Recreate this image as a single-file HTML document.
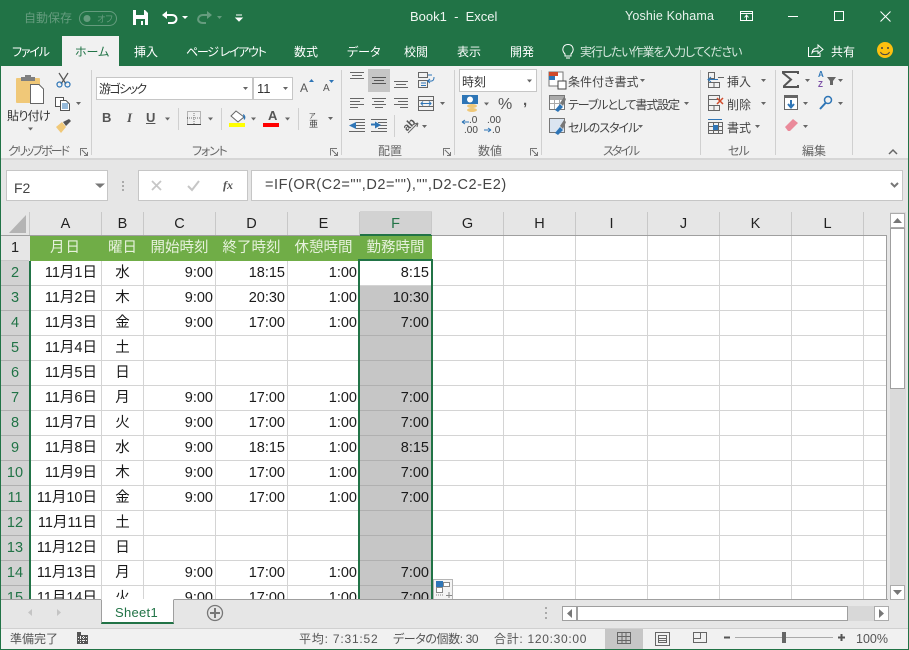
<!DOCTYPE html>
<html lang="ja"><head><meta charset="utf-8"><title>Book1 - Excel</title>
<style>
html,body{margin:0;padding:0}
body{width:909px;height:650px;overflow:hidden;position:relative;background:#e6e6e6;font-family:"Liberation Sans","Noto Sans CJK JP",sans-serif;font-feature-settings:"palt";color:#444}
div,span.t{position:absolute}
.t{position:absolute;white-space:nowrap;line-height:16px;font-size:12px}
.w{color:#fff}
.bx{background:#fff;border:1px solid #c6c6c6;box-sizing:border-box}
svg{position:absolute;left:0;top:0}
.c{position:absolute;line-height:24px;height:24px;font-size:14.5px;color:#1a1a1a;white-space:nowrap;font-feature-settings:normal}
.a{left:30px;width:67px;text-align:right}
.b{left:102px;width:41px;text-align:center}
.cc{left:144px;width:69px;text-align:right}
.d{left:216px;width:69px;text-align:right}
.e{left:288px;width:69px;text-align:right}
.f{left:360px;width:69px;text-align:right}
.ch{position:absolute;top:212px;height:23px;line-height:24px;text-align:center;font-size:14.5px;color:#222}
.rh{position:absolute;left:1px;width:28px;height:24px;line-height:24px;text-align:center;font-size:14.5px;color:#217346;background:#d2d2d2;border-bottom:1px solid #b0b0b0}
.h{position:absolute;top:236px;height:24px;line-height:24px;text-align:center;font-size:14.5px;color:#e6f1dc;font-feature-settings:normal}
</style></head><body>

<div style="left:0;top:0;width:909px;height:66px;background:#217346"></div>
<div style="left:62px;top:36px;width:57px;height:30px;background:#f1f1f1"></div>
<div style="left:1px;top:66px;width:907px;height:92px;background:#f1f1f1"></div>
<div style="left:1px;top:158px;width:907px;height:2px;background:#d6d6d6"></div>

<span class="t" style="left:24px;top:10px;color:#659c7e">自動保存</span>
<span class="t" style="left:97px;top:11px;color:#659c7e;font-size:9px">オフ</span>
<span class="t w" style="left:410px;top:9px;font-size:13px;white-space:pre;color:#f0f6f2">Book1  -  Excel</span>
<span class="t w" style="left:625px;top:8px;font-size:12.5px;color:#e8f2ec;letter-spacing:.15px">Yoshie Kohama</span>
<span class="t w" style="left:12px;top:44px;letter-spacing:-1.2px">ファイル</span>
<span class="t" style="left:75px;top:44px;color:#217346">ホーム</span>
<span class="t w" style="left:134px;top:44px">挿入</span>
<span class="t w" style="left:186px;top:44px;letter-spacing:-1.3px">ページ レイアウト</span>
<span class="t w" style="left:294px;top:44px">数式</span>
<span class="t w" style="left:347px;top:44px">データ</span>
<span class="t w" style="left:404px;top:44px">校閲</span>
<span class="t w" style="left:457px;top:44px">表示</span>
<span class="t w" style="left:510px;top:44px">開発</span>
<span class="t" style="left:580px;top:44px;color:#d8e8df;letter-spacing:-1.1px">実行したい作業を入力してください</span>
<span class="t w" style="left:831px;top:44px">共有</span>

<div class="bx" style="left:96px;top:77px;width:157px;height:23px"></div>
<div class="bx" style="left:253px;top:77px;width:40px;height:23px"></div>
<span class="t" style="left:99px;top:81px;color:#333;letter-spacing:-1.6px">游ゴシック</span>
<span class="t" style="left:257px;top:81px;color:#333;font-size:13px">11</span>
<span class="t" style="left:7px;top:108px;color:#333;letter-spacing:-.7px">貼り付け</span>
<span class="t" style="left:8px;top:143px;color:#666;letter-spacing:-2px">クリップボード</span>
<span class="t" style="left:192px;top:143px;color:#666;letter-spacing:-1.2px">フォント</span>
<span class="t" style="left:378px;top:143px;color:#666">配置</span>
<span class="t" style="left:478px;top:143px;color:#666">数値</span>
<span class="t" style="left:603px;top:143px;color:#666;letter-spacing:-2px">スタイル</span>
<span class="t" style="left:728px;top:143px;color:#666;letter-spacing:-1px">セル</span>
<span class="t" style="left:802px;top:143px;color:#666">編集</span>
<div style="left:368px;top:69px;width:22px;height:23px;background:#c6c6c6"></div>
<div class="bx" style="left:459px;top:69px;width:78px;height:23px"></div>
<span class="t" style="left:462px;top:74px;color:#333">時刻</span>
<span class="t" style="left:498px;top:96px;font-size:16px;line-height:18px;color:#555">%</span>
<span class="t" style="left:523px;top:93px;font-size:15px;font-weight:bold;color:#555">,</span>
<span class="t" style="left:568px;top:74px">条件付き書式</span>
<span class="t" style="left:568px;top:97px;letter-spacing:-1.1px">テーブルとして書式設定</span>
<span class="t" style="left:568px;top:120px;letter-spacing:-1px">セルのスタイル</span>
<span class="t" style="left:727px;top:74px">挿入</span>
<span class="t" style="left:727px;top:97px">削除</span>
<span class="t" style="left:727px;top:120px">書式</span>
<span class="t" style="left:102px;top:110px;font-weight:bold;color:#555;font-size:13px;width:9px">B</span>
<span class="t" style="left:127px;top:110px;font-weight:bold;font-style:italic;font-family:'Liberation Serif',serif;color:#555;font-size:13px">I</span>
<span class="t" style="left:146px;top:110px;font-weight:bold;color:#555;text-decoration:underline;font-size:13px">U</span>
<span class="t" style="left:268px;top:108px;font-weight:bold;color:#555;font-size:13px">A</span>
<span class="t" style="left:300px;top:80px;font-size:12px;color:#555">A</span>
<span class="t" style="left:323px;top:81px;font-size:10px;color:#555">A</span>
<span class="t" style="left:309px;top:109px;font-size:7px;color:#444">ア</span>
<span class="t" style="left:309px;top:116px;font-size:9px;color:#444">亜</span>
<span class="t" style="left:403px;top:117px;font-size:11px;font-weight:bold;color:#555;transform:rotate(-45deg)">ab</span>
<span class="t" style="left:469px;top:116px;font-size:10px;line-height:9px;color:#444">.0</span>
<span class="t" style="left:464px;top:126px;font-size:10px;line-height:9px;color:#444">.00</span>
<span class="t" style="left:487px;top:116px;font-size:10px;line-height:9px;color:#444">.00</span>
<span class="t" style="left:492px;top:126px;font-size:10px;line-height:9px;color:#444">.0</span>
<span class="t" style="left:818px;top:70px;font-size:8px;line-height:9px;color:#2e75b6;font-weight:bold">A</span>
<span class="t" style="left:818px;top:80px;font-size:8px;line-height:9px;color:#7b4fa6;font-weight:bold">Z</span>

<div class="bx" style="left:6px;top:170px;width:102px;height:31px"></div>
<div class="bx" style="left:138px;top:170px;width:110px;height:31px"></div>
<div class="bx" style="left:251px;top:170px;width:652px;height:31px"></div>
<span class="t" style="left:14px;top:180px;font-size:14px;color:#444">F2</span>
<span class="t" style="left:265px;top:177px;font-size:14.5px;color:#444;font-feature-settings:normal;letter-spacing:.56px">=IF(OR(C2="",D2=""),"",D2-C2-E2)</span>
<span class="t" style="left:223px;top:177px;font-family:'Liberation Serif',serif;font-style:italic;font-weight:bold;font-size:12px;color:#555">fx</span>

<div style="left:30px;top:236px;width:856px;height:363px;background:#fff"></div>
<div style="left:1px;top:211px;width:886px;height:25px;background:#e6e6e6;border-bottom:1px solid #9f9f9f;box-sizing:border-box"></div>
<div style="left:360px;top:211px;width:72px;height:25px;background:#d2d2d2;border-bottom:2px solid #217346;box-sizing:border-box"></div>
<div style="left:1px;top:236px;width:29px;height:363px;background:#d2d2d2"></div>
<div style="left:1px;top:236px;width:29px;height:25px;background:#e6e6e6"></div>
<div style="left:360px;top:286px;width:71px;height:313px;background:#c6c6c6"></div>

<svg width="909" height="650" viewBox="0 0 909 650" shape-rendering="crispEdges">
<g stroke="#d4d4d4" stroke-width="1">
<path d="M101.5 261V599M143.5 261V599M215.500 261V599M287.500 261V599M359.500 261V599M503.500 236V599M575.500 236V599M647.500 236V599M719.500 236V599M791.500 236V599M863.500 236V599M431.500 236V599"/>
<path d="M30 260.500H886M30 285.500H886M30 310.500H886M30 335.500H886M30 360.500H886M30 385.500H886M30 410.500H886M30 435.500H886M30 460.500H886M30 485.500H886M30 510.500H886M30 535.500H886M30 560.500H886M30 585.500H886"/>
</g>
<path d="M360 310.500H431M360 335.500H431M360 360.500H431M360 385.500H431M360 410.500H431M360 435.500H431M360 460.500H431M360 485.500H431M360 510.500H431M360 535.500H431M360 560.500H431M360 585.500H431" stroke="#b0b0b0"/>
<g stroke="#c8c8c8"><path d="M29.500 212V235M101.500 212V235M143.500 212V235M215.500 212V235M287.500 212V235M359.500 212V235M431.500 212V235M503.500 212V235M575.500 212V235M647.500 212V235M719.500 212V235M791.500 212V235M863.500 212V235"/></g>
</svg>

<div class="h" style="left:30px;background:#70ad47;height:25px;width:402px"></div>
<div class="h" style="left:30px;width:71px;letter-spacing:1px">月日</div>
<div class="h" style="left:102px;width:41px">曜日</div>
<div class="h" style="left:144px;width:71px">開始時刻</div>
<div class="h" style="left:216px;width:71px">終了時刻</div>
<div class="h" style="left:288px;width:71px">休憩時間</div>
<div class="h" style="left:360px;width:71px">勤務時間</div>

<div class="ch" style="left:30px;width:71px">A</div><div class="ch" style="left:102px;width:41px">B</div><div class="ch" style="left:144px;width:71px">C</div><div class="ch" style="left:216px;width:71px">D</div><div class="ch" style="left:288px;width:71px">E</div><div class="ch" style="left:360px;width:71px;color:#217346">F</div><div class="ch" style="left:432px;width:71px">G</div><div class="ch" style="left:504px;width:71px">H</div><div class="ch" style="left:576px;width:71px">I</div><div class="ch" style="left:648px;width:71px">J</div><div class="ch" style="left:720px;width:71px">K</div><div class="ch" style="left:792px;width:71px">L</div>

<div class="rh" style="top:236px;background:#e6e6e6;color:#222;border-bottom-color:#c8c8c8">1</div>
<div class="rh" style="top:261px">2</div><div class="rh" style="top:286px">3</div><div class="rh" style="top:311px">4</div><div class="rh" style="top:336px">5</div><div class="rh" style="top:361px">6</div><div class="rh" style="top:386px">7</div><div class="rh" style="top:411px">8</div><div class="rh" style="top:436px">9</div><div class="rh" style="top:461px">10</div><div class="rh" style="top:486px">11</div><div class="rh" style="top:511px">12</div><div class="rh" style="top:536px">13</div><div class="rh" style="top:561px">14</div><div class="rh" style="top:586px;height:13px;overflow:hidden;border:0">15</div>

<div class="c a" style="top:261px">11月1日</div><div class="c b" style="top:261px">水</div><div class="c cc" style="top:261px">9:00</div><div class="c d" style="top:261px">18:15</div><div class="c e" style="top:261px">1:00</div><div class="c f" style="top:261px">8:15</div>
<div class="c a" style="top:286px">11月2日</div><div class="c b" style="top:286px">木</div><div class="c cc" style="top:286px">9:00</div><div class="c d" style="top:286px">20:30</div><div class="c e" style="top:286px">1:00</div><div class="c f" style="top:286px">10:30</div>
<div class="c a" style="top:311px">11月3日</div><div class="c b" style="top:311px">金</div><div class="c cc" style="top:311px">9:00</div><div class="c d" style="top:311px">17:00</div><div class="c e" style="top:311px">1:00</div><div class="c f" style="top:311px">7:00</div>
<div class="c a" style="top:336px">11月4日</div><div class="c b" style="top:336px">土</div>
<div class="c a" style="top:361px">11月5日</div><div class="c b" style="top:361px">日</div>
<div class="c a" style="top:386px">11月6日</div><div class="c b" style="top:386px">月</div><div class="c cc" style="top:386px">9:00</div><div class="c d" style="top:386px">17:00</div><div class="c e" style="top:386px">1:00</div><div class="c f" style="top:386px">7:00</div>
<div class="c a" style="top:411px">11月7日</div><div class="c b" style="top:411px">火</div><div class="c cc" style="top:411px">9:00</div><div class="c d" style="top:411px">17:00</div><div class="c e" style="top:411px">1:00</div><div class="c f" style="top:411px">7:00</div>
<div class="c a" style="top:436px">11月8日</div><div class="c b" style="top:436px">水</div><div class="c cc" style="top:436px">9:00</div><div class="c d" style="top:436px">18:15</div><div class="c e" style="top:436px">1:00</div><div class="c f" style="top:436px">8:15</div>
<div class="c a" style="top:461px">11月9日</div><div class="c b" style="top:461px">木</div><div class="c cc" style="top:461px">9:00</div><div class="c d" style="top:461px">17:00</div><div class="c e" style="top:461px">1:00</div><div class="c f" style="top:461px">7:00</div>
<div class="c a" style="top:486px">11月10日</div><div class="c b" style="top:486px">金</div><div class="c cc" style="top:486px">9:00</div><div class="c d" style="top:486px">17:00</div><div class="c e" style="top:486px">1:00</div><div class="c f" style="top:486px">7:00</div>
<div class="c a" style="top:511px">11月11日</div><div class="c b" style="top:511px">土</div>
<div class="c a" style="top:536px">11月12日</div><div class="c b" style="top:536px">日</div>
<div class="c a" style="top:561px">11月13日</div><div class="c b" style="top:561px">月</div><div class="c cc" style="top:561px">9:00</div><div class="c d" style="top:561px">17:00</div><div class="c e" style="top:561px">1:00</div><div class="c f" style="top:561px">7:00</div>
<div class="c a" style="top:586px">11月14日</div><div class="c b" style="top:586px">火</div><div class="c cc" style="top:586px">9:00</div><div class="c d" style="top:586px">17:00</div><div class="c e" style="top:586px">1:00</div><div class="c f" style="top:586px">7:00</div>

<div style="left:358px;top:259px;width:75px;height:345px;border:2px solid #217346;box-sizing:border-box"></div>
<div style="left:29px;top:261px;width:2px;height:345px;background:#217346"></div>
<div style="left:433px;top:579px;width:20px;height:21px;background:#f4f4f4;border:1px solid #b5b5b5;box-sizing:border-box"></div>

<div style="left:1px;top:599px;width:907px;height:30px;background:#e6e6e6;border-top:1px solid #9f9f9f;box-sizing:border-box"></div>
<div style="left:1px;top:628px;width:907px;height:21px;background:#f1f1f1;border-top:1px solid #d0d0d0;box-sizing:border-box"></div>
<div style="left:888px;top:203px;width:20px;height:397px;background:#e6e6e6"></div>
<div style="left:886px;top:236px;width:1px;height:364px;background:#9f9f9f"></div>
<div style="left:101px;top:599px;width:73px;height:25px;background:#fff;border:1px solid #9f9f9f;border-top:1px solid #fff;border-bottom:2px solid #217346;box-sizing:border-box"></div>
<span class="t" style="left:115px;top:605px;font-size:13px;color:#217346;letter-spacing:.3px">Sheet1</span>
<div style="left:890px;top:212px;width:16px;height:388px;background:#dadada"></div>
<div class="bx" style="left:890px;top:213px;width:15px;height:15px;border-color:#ababab"></div>
<div class="bx" style="left:890px;top:228px;width:15px;height:161px;border-color:#9f9f9f"></div>
<div class="bx" style="left:890px;top:585px;width:15px;height:15px;border-color:#ababab"></div>
<div style="left:577px;top:606px;width:297px;height:15px;background:#d8d8d8"></div>
<div class="bx" style="left:562px;top:606px;width:15px;height:15px;border-color:#9f9f9f"></div>
<div class="bx" style="left:577px;top:606px;width:271px;height:15px;border-color:#9f9f9f"></div>
<div class="bx" style="left:874px;top:606px;width:15px;height:15px;border-color:#ababab"></div>
<div style="left:605px;top:629px;width:38px;height:20px;background:#c6c6c6"></div>

<span class="t" style="left:10px;top:631px;color:#555">準備完了</span>
<span class="t" style="left:299px;top:631px;color:#555;letter-spacing:.8px">平均: 7:31:52</span>
<span class="t" style="left:393px;top:631px;color:#555;letter-spacing:-.4px">データの個数: 30</span>
<span class="t" style="left:494px;top:631px;color:#555;letter-spacing:.7px">合計: 120:30:00</span>
<span class="t" style="left:856px;top:631px;color:#555;font-size:12.5px">100%</span>

<svg width="909" height="650" viewBox="0 0 909 650">
<!-- window edges -->
<path d="M.5 0V650M908.500 0V650M0 649.500H909" stroke="#217346" fill="none"/>
<!-- title bar -->
<rect x="79.500" y="11.500" width="37" height="14" rx="7" fill="none" stroke="#659c7e" stroke-width="1"/>
<circle cx="87" cy="18.500" r="3.500" fill="#659c7e"/>
<path d="M133 10H145L148 13V25H133Z" fill="#fff"/><rect x="136" y="10" width="8" height="5" fill="#217346"/><rect x="136" y="19" width="9" height="6" fill="#217346"/><rect x="141" y="21" width="2" height="4" fill="#fff"/>
<path d="M165 15H172C178 15 178 23 172 23H168" fill="none" stroke="#fff" stroke-width="2"/><path d="M162 15L167 11V19Z" fill="#fff"/>
<path d="M182 16H188L185 19Z" fill="#fff"/>
<path d="M208 15H203C197 15 196 23 203 23H206" fill="none" stroke="#659c7e" stroke-width="2"/><path d="M212 15L207 11V19Z" fill="#659c7e"/>
<path d="M217 16H222L219.500 19Z" fill="#659c7e"/>
<path d="M236 15H242M236 18H242L239 21Z" fill="#fff" stroke="#fff" stroke-width="1"/>
<g fill="none" stroke="#fff" stroke-width="1" shape-rendering="crispEdges">
<path d="M740.500 11.500H752.500V20.500H740.500ZM741 13.500H752M746.500 20V15.500"/>
<path d="M788 16.500H798"/>
<rect x="834.500" y="11.500" width="9" height="9"/>
</g>
<path d="M744.500 17.500L746.500 15L748.500 17.500" stroke="#fff" fill="none"/>
<path d="M880.500 11.500L890.500 21.500M890.500 11.500L880.500 21.500" stroke="#fff" fill="none"/>
<!-- tell me bulb -->
<path d="M565 54C561 50 563 44.500 568 44.500C573 44.500 575 50 571 54V56H565ZM566 58H570" fill="none" stroke="#fff" stroke-width="1"/>
<path d="M808.500 47V56.500H820V53M812 53C812.500 49 815 48 818 48V45L823 49.500L818 53.500V51C815 51 813.500 51 812 53Z" fill="none" stroke="#fff" stroke-width="1"/>
<circle cx="885" cy="50" r="8" fill="#fcc00f"/><circle cx="882" cy="48" r="1" fill="#444"/><circle cx="888" cy="48" r="1" fill="#444"/><path d="M880.500 52C882 55.500 888 55.500 889.500 52" fill="none" stroke="#444"/>
<!-- separators -->
<g stroke="#d0d0d0" stroke-width="1" shape-rendering="crispEdges">
<path d="M91.500 70V155M178.500 108V130M221.500 108V130M298.500 108V130M341.500 70V155M394.500 115V137M454.500 70V155M541.500 70V155M700.500 70V155M775.500 70V155M852.500 70V155"/>
</g>
<!-- clipboard -->
<rect x="16" y="78" width="24" height="25" rx="1" fill="#f0c878"/>
<path d="M21 81V77H25V75H31V77H35V81Z" fill="#7f7f7f"/>
<path d="M30.500 84.500H39L43.500 89V103.500H30.500Z" fill="#fff" stroke="#666"/>
<g fill="none" stroke="#555" stroke-width="1.200"><path d="M59 73L66 84M68 73L61 84"/></g>
<circle cx="59.500" cy="84.500" r="2.500" fill="none" stroke="#2e75b6" stroke-width="1.200"/><circle cx="67.500" cy="84.500" r="2.500" fill="none" stroke="#2e75b6" stroke-width="1.200"/>
<g fill="#fff" stroke="#555" stroke-width="1"><path d="M55.500 97.500H63.500V106.500H55.500Z"/><path d="M60.500 100.500H66L69.500 104V110.500H60.500Z"/></g>
<path d="M62 104H68M62 106H68M62 108H68" stroke="#2e75b6"/>
<path d="M56 127L62 122L66 127L61 133Z" fill="#f0c878"/><path d="M63 122L69 119L71 121L66 126Z" fill="#555"/>
<!-- carets -->
<g fill="#666">
<path d="M28 127.500H33L30.500 130.500Z"/><path d="M76 102H81L78.500 105Z"/>
<path d="M243 87H248L245.500 90Z"/><path d="M283 87H288L285.500 90Z"/>
<path d="M165 117.500H170L167.500 120.500Z"/><path d="M208 117.500H213L210.500 120.500Z"/><path d="M251 117.500H256L253.500 120.500Z"/><path d="M285 117.500H290L287.500 120.500Z"/>
<path d="M328 117H333L330.500 120Z"/>
<path d="M440 102H445L442.500 105Z"/><path d="M422 125H427L424.500 128Z"/>
<path d="M527 79.500H532L529.500 82.500Z"/><path d="M484 102.500H489L486.500 105.500Z"/>
<path d="M640 79H645L642.500 82Z"/><path d="M684 102H689L686.500 105Z"/><path d="M638 125H643L640.500 128Z"/>
<path d="M761 79H766L763.500 82Z"/><path d="M761 102H766L763.500 105Z"/><path d="M755 125H760L757.500 128Z"/>
<path d="M805 79H810L807.500 82Z"/><path d="M838 79H843L840.500 82Z"/><path d="M803 102H808L805.500 105Z"/><path d="M838 102H843L840.500 105Z"/><path d="M803 125H808L805.500 128Z"/>
<path d="M95 183.500H105L100 188Z" fill="#777"/>
</g>
<!-- launchers -->
<g fill="none" stroke="#777" stroke-width="1" shape-rendering="crispEdges"><path d="M80.500 155.500V148.500H87M84 155.500H87.500V152M82 150L87 155"/><path d="M330.500 155.500V148.500H337M334 155.500H337.500V152M332 150L337 155"/><path d="M443.500 155.500V148.500H450M447 155.500H450.500V152M445 150L450 155"/><path d="M530.500 155.500V148.500H537M534 155.500H537.500V152M532 150L537 155"/></g>
<!-- font size arrows -->
<path d="M309 82H314L311.500 79Z" fill="#2e75b6"/><path d="M329 80H334L331.500 83Z" fill="#2e75b6"/>
<!-- borders / fill / colors -->
<path d="M187.500 111.500H200.500V124.500H187.500ZM194 111V125M187 118H201" fill="none" stroke="#777" stroke-dasharray="1 1" shape-rendering="crispEdges"/>
<path d="M187 124.500H201" stroke="#444" shape-rendering="crispEdges"/>
<path d="M236 111L244 117L238 122L231 116Z" fill="#fff" stroke="#666"/><path d="M243 114C246 115 246 119 244 120Z" fill="#2e75b6"/>
<rect x="229" y="123" width="16" height="4" fill="#ff0"/>
<rect x="263" y="123" width="16" height="4" fill="#f00"/>
<!-- alignment -->
<g stroke="#666" stroke-width="1" shape-rendering="crispEdges" fill="none">
<path d="M350 72.500H364M352 75.500H362M350 78.500H364"/>
<path d="M372 77.500H386M374 80.500H384M372 83.500H386" stroke="#555"/>
<path d="M394 81.500H408M396 84.500H406M394 87.500H408"/>
<path d="M350 98.500H364M350 101.500H360M350 104.500H364M350 107.500H358"/>
<path d="M372 98.500H386M374 101.500H384M372 104.500H386M375 107.500H383"/>
<path d="M394 98.500H408M398 101.500H408M394 104.500H408M400 107.500H408"/>
<path d="M349 119.500H365M356 122.500H365M356 125.500H365M356 128.500H365M349 131.500H365"/>
<path d="M371 119.500H387M378 122.500H387M378 125.500H387M378 128.500H387M371 131.500H387"/>
<path d="M418.500 72.500H427.500V77.500H418.500ZM418.500 80.500H427.500V87.500H418.500Z"/>
<path d="M418.500 96.500H433.500V110.500H418.500ZM419 100.500H433M419 106.500H433"/>
</g>
<path d="M428 75H432M421 83H426M421 85.500H426" stroke="#2e75b6"/>
<path d="M434 77C434 82 431 81 428 81M430 79L427.500 81L430 83" stroke="#2e75b6" fill="none"/>
<path d="M421 103.500H431M423 101.500L421 103.500L423 105.500M429 101.500L431 103.500L429 105.500" stroke="#2e75b6" fill="none"/>
<path d="M356 122L349 125.500L356 129Z" fill="#2e75b6"/><path d="M356 125.500H351" stroke="#2e75b6" stroke-width="2"/>
<path d="M371 124.500H377" stroke="#2e75b6" stroke-width="2"/><path d="M375 121.500L381 125L375 128.500Z" fill="#2e75b6"/>
<path d="M408 133L418 123M418 123L414 124M418 123L417 127" stroke="#666" fill="none"/>
<!-- number -->
<rect x="462" y="95" width="16" height="9" fill="#2e75b6"/><circle cx="470" cy="99.500" r="3" fill="#fff"/>
<ellipse cx="472" cy="106" rx="5" ry="2" fill="#f0c878"/><ellipse cx="472" cy="110" rx="5" ry="2" fill="#f0c878"/>
<path d="M462 122H469M462 122L465 120M462 122L465 124" stroke="#2e75b6" fill="none"/>
<path d="M484 130H491M491 130L488 128M491 130L488 132" stroke="#2e75b6" fill="none"/>
<!-- styles -->
<g shape-rendering="crispEdges">
<rect x="549" y="72" width="14" height="14" fill="#fff" stroke="#777"/><rect x="549" y="72" width="9" height="4" fill="#d04a2a"/><rect x="549" y="76" width="6" height="4" fill="#2e75b6"/><rect x="558" y="81" width="8" height="8" fill="#fff" stroke="#444"/>
<rect x="549.500" y="95.500" width="15" height="14" fill="#fff" stroke="#777"/><path d="M550 99.500H564M550 103.500H564M554.500 96V109M559.500 96V109" stroke="#aaa"/><rect x="550" y="96" width="14" height="3" fill="#aaa"/>
<rect x="549.500" y="118.500" width="15" height="14" fill="#dbe5f1" stroke="#777"/>
</g>
<path d="M555 110L560 104L563 107L558 112Z" fill="#2e75b6"/><path d="M560 103L564 97L566 99L563 106Z" fill="#777"/>
<path d="M555 133L560 127L563 130L558 135Z" fill="#2e75b6"/><path d="M560 126L564 120L566 122L563 129Z" fill="#777"/>
<!-- cells -->
<g fill="none" stroke="#666" shape-rendering="crispEdges">
<path d="M708.500 72.500H714.500V78.500H708.500ZM708.500 82.500H719.500V87.500H708.500ZM714 82V88M708.500 78.500V82.500M718 77.500H724"/>
<path d="M708.500 95.500H719.500V99.500H708.500ZM708.500 105.500H719.500V110.500H708.500ZM714 105V111M708.500 99.500V105.500"/>
<path d="M708.500 122.500H722.500V133.500H708.500ZM708.500 126.500H722.500M708.500 130.500H722.500M713.500 122V134M718.500 122V134"/>
</g>
<path d="M708 79.500H718M711 77L708 79.500L711 82" stroke="#2e75b6" fill="none"/>
<path d="M717 98L723 104M723 98L717 104" stroke="#d04a2a" stroke-width="1.500"/>
<rect x="713" y="125" width="5" height="5" fill="#2e75b6"/>
<path d="M708 119.500H722" stroke="#2e75b6"/>
<!-- editing -->
<path d="M798 74V72H783V73L791 79.500L784 86V87H798V85" fill="none" stroke="#555" stroke-width="2"/>
<path d="M827 77H836L833 81V85H830V81Z" fill="#666"/>
<rect x="784.500" y="95.500" width="13" height="14" fill="#fff" stroke="#666"/><rect x="785" y="96" width="12" height="2" fill="#666"/>
<path d="M791 100V107M788 104L791 107.500L794 104" stroke="#2e75b6" stroke-width="2" fill="none"/>
<circle cx="828" cy="100" r="3.500" fill="none" stroke="#2e75b6" stroke-width="1.500"/><path d="M825.500 103L820 109" stroke="#2e75b6" stroke-width="2"/>
<path d="M785 127L793 119L798 123L790 131H788Z" fill="#ea8a9a"/>
<path d="M889 154L893 150L897 154" fill="none" stroke="#666" stroke-width="1.500"/>
<!-- formula bar -->
<rect x="122" y="181" width="2" height="2" fill="#aaa"/><rect x="122" y="185" width="2" height="2" fill="#aaa"/><rect x="122" y="189" width="2" height="2" fill="#aaa"/>
<path d="M152 181L161 190M161 181L152 190" stroke="#c6c6c6" stroke-width="1.800"/>
<path d="M188 186L192 190L199 181" fill="none" stroke="#c6c6c6" stroke-width="2"/>
<path d="M891 183L894.500 186.500L898 183" fill="none" stroke="#777" stroke-width="2"/>
<!-- corner -->
<path d="M26 215V233H9Z" fill="#b4b4b4"/>
<!-- paste options -->
<g shape-rendering="crispEdges">
<rect x="437" y="582" width="5" height="4" fill="#2e75b6"/><rect x="436.500" y="581.500" width="6" height="5" fill="none" stroke="#2e75b6"/><rect x="443.500" y="582.500" width="6" height="4" fill="#fff" stroke="#888"/><rect x="436.500" y="587.500" width="6" height="5" fill="#fff" stroke="#888"/>
<path d="M436 595H444" stroke="#888" stroke-dasharray="1 1"/><path d="M446 595.500H452M449 592V598" stroke="#888"/>
</g>
<!-- sheet nav -->
<path d="M32 609V616L28 612.500Z" fill="#c4c4c4"/><path d="M57 609V616L61 612.500Z" fill="#c4c4c4"/>
<circle cx="215" cy="613" r="7.500" fill="none" stroke="#777" stroke-width="1.300"/><path d="M215 608V618M210 613H220" stroke="#777" stroke-width="2"/>
<rect x="545" y="607" width="2" height="2" fill="#aaa"/><rect x="545" y="612" width="2" height="2" fill="#aaa"/><rect x="545" y="617" width="2" height="2" fill="#aaa"/>
<!-- scroll arrows -->
<path d="M893 223H902L897.500 218Z" fill="#777"/><path d="M893 590H902L897.500 595Z" fill="#777"/>
<path d="M572 609V618L567 613.500Z" fill="#777"/><path d="M879 609V618L884 613.500Z" fill="#777"/>
<!-- status icons -->
<g shape-rendering="crispEdges">
<rect x="77" y="632" width="4" height="3" fill="#555"/><rect x="77" y="635" width="11" height="9" fill="#555"/><path d="M78 637.500H87M78 640.500H87M80.500 636V644M83.500 636V644" stroke="#f1f1f1" stroke-dasharray="1 1"/>
<path d="M617.500 632.500H630.500V643.500H617.500ZM622 632.500V643.500M626 632.500V643.500M617.500 636.500H630.500M617.500 640.500H630.500" fill="none" stroke="#666"/>
<path d="M655.500 632.500H669.500V645.500H655.500ZM658.500 635.500H666.500V642.500H658.500ZM659 638.500H666M659 640.500H666" fill="none" stroke="#666"/>
<path d="M693.500 632.500H706.500V642.500H693.500ZM700.500 632.500V638.500H693.500" fill="none" stroke="#666"/>
<path d="M724 637.500H730" stroke="#555" stroke-width="2"/>
<path d="M735 637.500H833" stroke="#aaa"/>
<rect x="782" y="632" width="4" height="11" fill="#666"/>
<path d="M838 637.500H845M841.500 634V641" stroke="#555" stroke-width="2"/>
</g>
</svg>
</body></html>
